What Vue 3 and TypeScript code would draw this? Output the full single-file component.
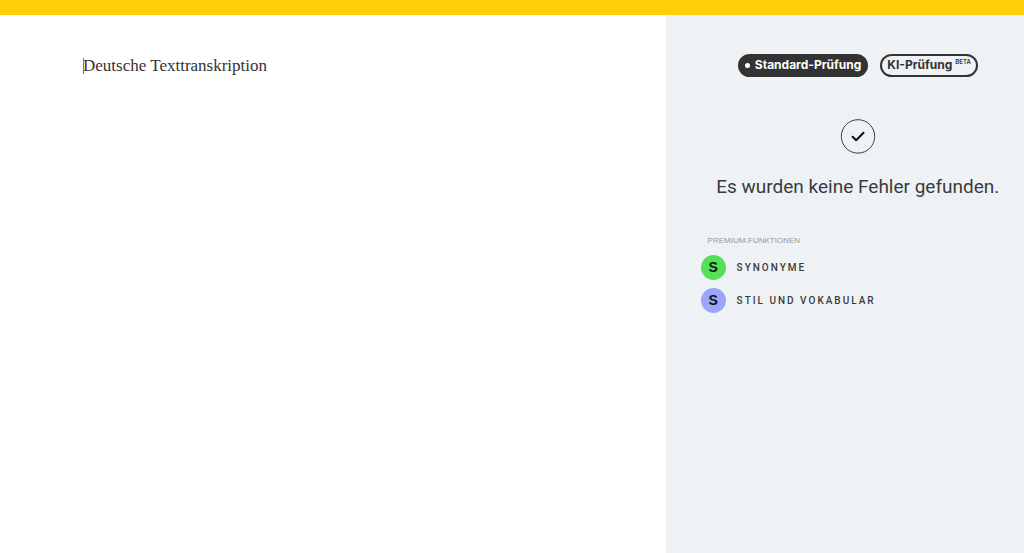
<script setup lang="ts">
import { ref } from 'vue'

interface PremiumFeature {
  letter: string
  label: string
  tone: string
}

const text = ref('Deutsche Texttranskription')
const mode = ref<'standard' | 'ki'>('standard')
const features: PremiumFeature[] = [
  { letter: 'S', label: 'Synonyme', tone: 'green' },
  { letter: 'S', label: 'Stil und Vokabular', tone: 'violet' },
]
</script>

<template>
  <div class="page">
    <header class="topbar"></header>
    <div class="workspace">
      <main class="editor">
        <span class="caret" aria-hidden="true"></span>
        <textarea v-model="text" class="text" aria-label="Text" spellcheck="false"></textarea>
      </main>
      <aside class="sidebar">
        <div class="modes">
          <button type="button" class="mode" :class="{ active: mode === 'standard' }" @click="mode = 'standard'">
            <span v-if="mode === 'standard'" class="dot"></span>Standard-Prüfung
          </button>
          <button type="button" class="mode" :class="{ active: mode === 'ki' }" @click="mode = 'ki'">
            <span v-if="mode === 'ki'" class="dot"></span>KI-Prüfung<span class="beta">BETA</span>
          </button>
        </div>
        <svg class="check" width="36" height="36" viewBox="0 0 36 36" aria-hidden="true">
          <circle cx="18" cy="18.4" r="16.7" fill="none" stroke="#3c3e40" stroke-width="1" />
          <path d="M12.6 18.8l3.6 3.5 7.3-7.6" fill="none" stroke="#111" stroke-width="2" stroke-linecap="round" stroke-linejoin="round" />
        </svg>
        <h1 class="result">Es wurden keine Fehler gefunden.</h1>
        <section class="premium">
          <h2 class="caption">PREMIUM-FUNKTIONEN</h2>
          <ul class="features">
            <li v-for="f in features" :key="f.label" class="feature">
              <span class="badge" :class="f.tone">{{ f.letter }}</span>
              <span class="label">{{ f.label }}</span>
            </li>
          </ul>
        </section>
      </aside>
    </div>
  </div>
</template>

<style>
body {
  margin: 0;
}
</style>

<style scoped>
.page {
  min-height: 100vh;
  display: flex;
  flex-direction: column;
  font-family: "Liberation Sans", Arial, sans-serif;
  color: #3a3b3d;
  background: #fff;
}
.topbar {
  height: 15px;
  background: #ffd00a;
}
.workspace {
  flex: 1;
  display: grid;
  grid-template-columns: 65fr 35fr;
}
.editor {
  position: relative;
  display: flex;
  padding: 39px 40px 24px 83px;
}
.caret {
  position: absolute;
  left: 83px;
  top: 43px;
  width: 1px;
  height: 16px;
  background: #777;
}
.text {
  flex: 1;
  min-width: 0;
  padding: 0;
  border: 0;
  outline: 0;
  resize: none;
  background: transparent;
  color: #333;
  font-family: "Liberation Serif", "Times New Roman", serif;
  font-size: 17px;
  line-height: 24px;
}
.sidebar {
  min-width: 0;
  display: flex;
  flex-direction: column;
  align-items: center;
  padding: 39px 9px 24px 35px;
  background: #eef2f5;
}
.modes {
  display: flex;
  gap: 12px;
}
.mode {
  display: flex;
  align-items: center;
  height: 23px;
  padding: 0 5px 1px;
  border: 2px solid #333;
  border-radius: 12px;
  background: transparent;
  color: #333;
  font-family: Inter, "Liberation Sans", sans-serif;
  font-size: 12px;
  font-weight: 700;
  line-height: 16px;
  white-space: nowrap;
  cursor: pointer;
}
.mode.active {
  background: #333;
  color: #fff;
}
.dot {
  width: 5px;
  height: 5px;
  margin-right: 5px;
  border-radius: 50%;
  background: #fff;
}
.beta {
  align-self: flex-start;
  margin-left: 3px;
  font-size: 6px;
  font-weight: 600;
  line-height: 11px;
}
.check {
  margin-top: 41px;
}
.result {
  margin: 19px 0 0;
  font-family: Roboto, "Liberation Sans", sans-serif;
  font-size: 19px;
  font-weight: 400;
  line-height: 28px;
  white-space: nowrap;
}
.premium {
  align-self: stretch;
  margin-top: 35px;
}
.caption {
  margin: 0 0 9px 7px;
  font-size: 8px;
  font-weight: 400;
  line-height: 10px;
  color: #999;
}
.features {
  display: flex;
  flex-direction: column;
  gap: 8px;
  margin: 0;
  padding: 0;
  list-style: none;
}
.feature {
  display: flex;
  align-items: center;
  gap: 11px;
}
.badge {
  width: 25px;
  height: 25px;
  border-radius: 50%;
  font-size: 14px;
  font-weight: 700;
  line-height: 24px;
  text-align: center;
  color: #111;
}
.green {
  background: #55e05a;
}
.violet {
  background: #9ba6fa;
}
.label {
  font-family: Roboto, "Liberation Sans", sans-serif;
  font-size: 10px;
  font-weight: 500;
  letter-spacing: 2px;
  text-transform: uppercase;
}
</style>
